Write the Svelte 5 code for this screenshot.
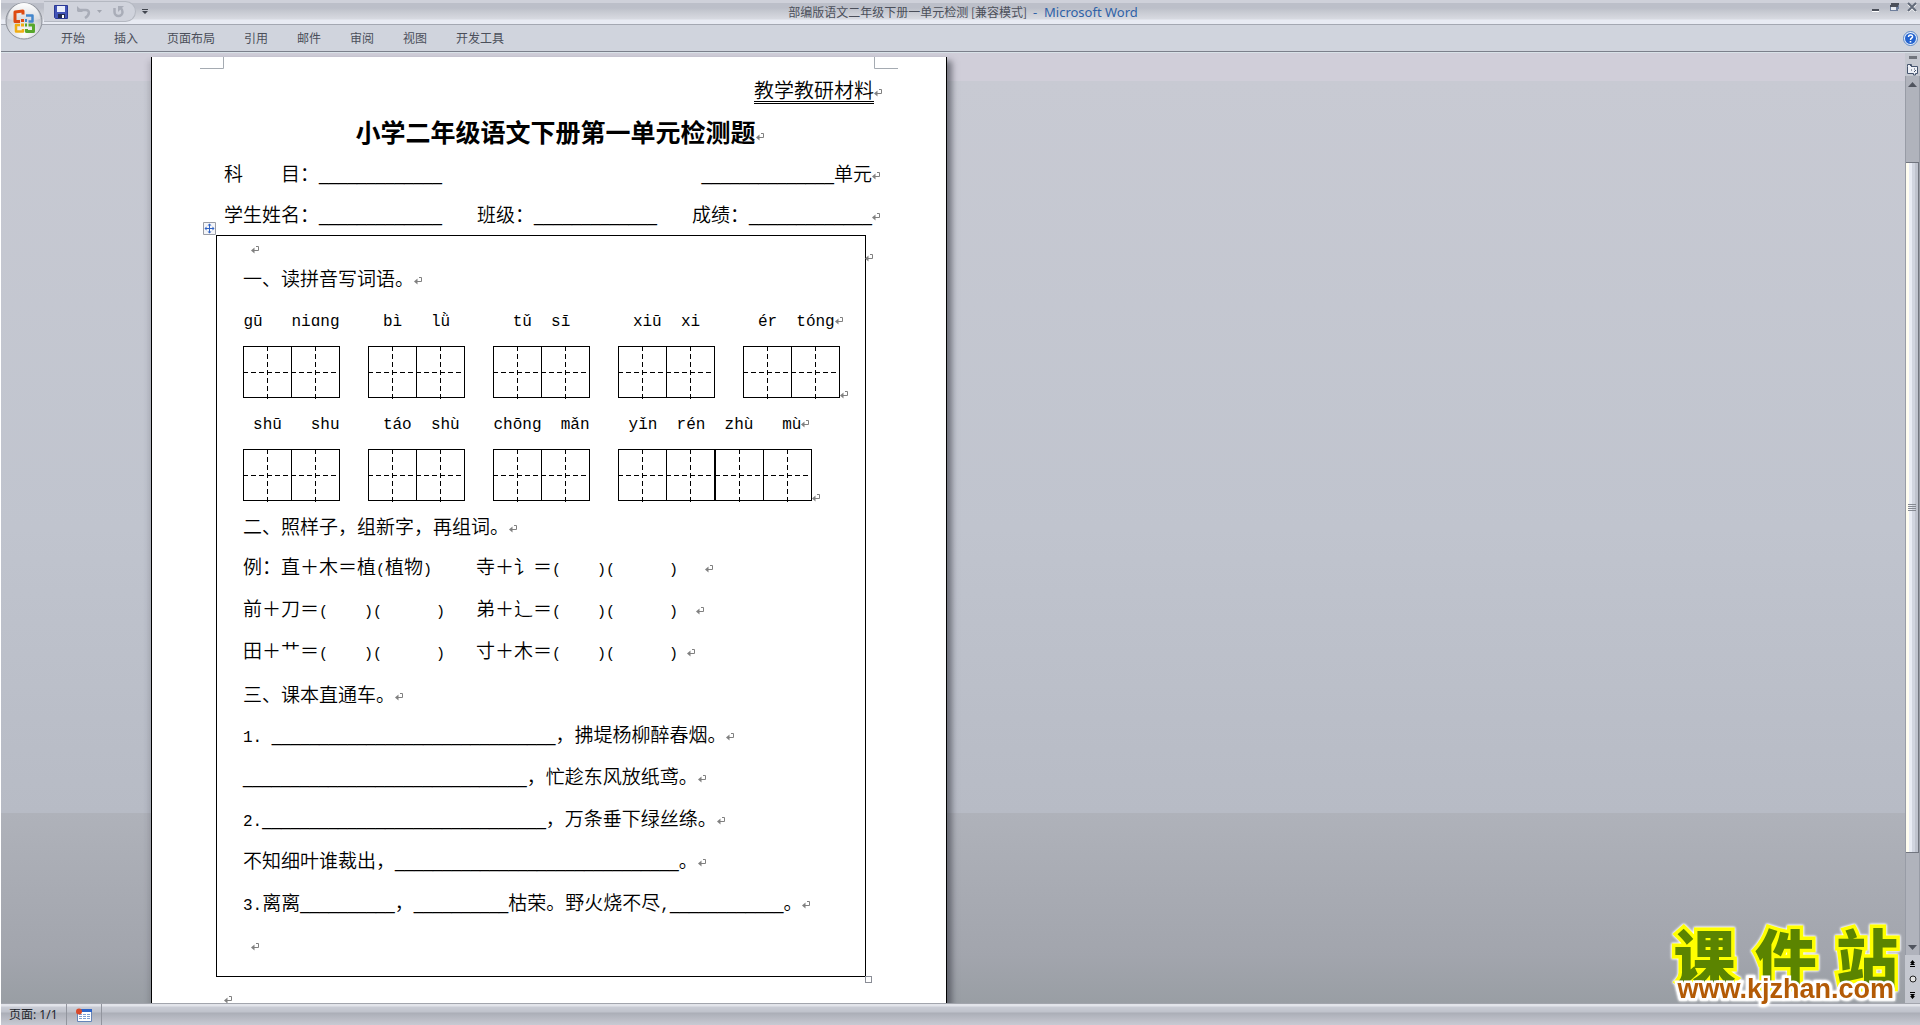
<script lang="ts">
	interface Run {
		kind: 'cjk' | 'latin' | 'blank';
		text: string;
	}

	const tabs = ['开始', '插入', '页面布局', '引用', '邮件', '审阅', '视图', '开发工具'];

	const pinyinRows = [
		[
			{ text: 'gū   niɑng', cells: 2 },
			{ text: 'bì   lǜ', cells: 2 },
			{ text: 'tǔ  sī', cells: 2 },
			{ text: 'xiū  xi', cells: 2 },
			{ text: ' ér  tóng', cells: 2 }
		],
		[
			{ text: ' shū   shu', cells: 2 },
			{ text: ' táo  shù', cells: 2 },
			{ text: 'chōng  mǎn', cells: 2 },
			{ text: 'yǐn  rén  zhù   mù', cells: 4 }
		]
	];

	const equations = [
		['例：直＋木＝植(植物)', '寺＋讠＝(    )(      )   '],
		['前＋刀＝(    )(      )', '弟＋辶＝(    )(      )  '],
		['田＋艹＝(    )(      )', '寸＋木＝(    )(      ) ']
	];

	const line = (n: number) => '_'.repeat(n);

	const verses = [
		`1. ${line(30)}，拂堤杨柳醉春烟。`,
		`${line(30)}，忙趁东风放纸鸢。`,
		`2.${line(30)}，万条垂下绿丝绦。`,
		`不知细叶谁裁出，${line(30)}。`,
		`3.离离${line(10)}，${line(10)}枯荣。野火烧不尽,${line(12)}。`
	];

	// half-width text and answer blanks use their own faces
	function runs(text: string): Run[] {
		const parts = text.match(/_+|[ -^`-~]+|[^ -~]+/g) ?? [];
		return parts.map((part) => {
			if (part[0] === '_') return { kind: 'blank', text: part };
			return { kind: part.charCodeAt(0) < 128 ? 'latin' : 'cjk', text: part };
		});
	}
</script>

{#snippet typeset(text: string)}{#each runs(text) as run}<span class={run.kind}>{run.text}</span>{/each}{/snippet}

{#snippet mark()}<svg class="mark" width="8" height="8" viewBox="0 0 8 8" aria-hidden="true"><path d="M5 .5h2.500v4H2" fill="none" stroke="#808080" /><path d="M0 4.500 3.500 1.500v6z" fill="#808080" /></svg>{/snippet}

{#snippet writingBox(cells: number)}
	<svg class="box" width={cells * 48 + cells / 2} height="54" shape-rendering="crispEdges" aria-hidden="true">
		{#each Array(cells / 2) as _, i}
			<g transform="translate({i * 97} 0)" fill="none" stroke="#000">
				<rect x=".5" y=".5" width="96" height="51" />
				<path d="M48.500 0v52" />
				<path d="M0 26.500h97M24.500 0v53M72.500 0v53" stroke-dasharray="5 3" />
			</g>
		{/each}
	</svg>
{/snippet}

<div class="window">
	<header class="titlebar">
		<div class="quick">
			<button aria-label="保存">
				<svg width="14" height="14" viewBox="0 0 14 14">
					<path d="M.5.5h13v13h-12l-1-1z" fill="#4254b8" stroke="#2a3894" />
					<path d="M3 1h8v6H3z" fill="#e9eefb" />
					<path d="M4 9h7v4H4z" fill="#222b52" />
					<path d="M8 10h2v3H8z" fill="#fff" />
				</svg>
			</button>
			<button class="undo" aria-label="撤消">
				<svg width="14" height="14" viewBox="0 0 14 14">
					<path d="M2 5h7c4 0 4 5-1 8" fill="none" stroke="#a9adb8" stroke-width="2.500" />
					<path d="M0 6V1l6 6H1z" fill="#a9adb8" />
				</svg>
				<svg width="5" height="4" viewBox="0 0 5 4"><path d="M0 0h5L2.500 3z" fill="#a2a6b0" /></svg>
			</button>
			<button aria-label="恢复">
				<svg width="14" height="14" viewBox="0 0 14 14">
					<path d="M3.500 3v4a4 4 0 0 0 8 0q0-2.500-2-4" fill="none" stroke="#a9adb8" stroke-width="2.500" />
					<path d="M7 1h6L7 7z" fill="#a9adb8" />
				</svg>
			</button>
		</div>
		<button class="more" aria-label="自定义快速访问工具栏">
			<svg width="6" height="6" viewBox="0 0 6 6"><path d="M0 0h6v1H0zM0 2h6L3 5z" fill="#42464f" /></svg>
		</button>
		<div class="caption">部编版语文二年级下册一单元检测 [兼容模式] <span class="app">&nbsp;-&nbsp; Microsoft Word</span></div>
		<div class="controls">
			<button aria-label="最小化">
				<svg width="10" height="12" viewBox="0 0 10 12"><path d="M1 9h7v2H1z" fill="#4c505a" /><path d="M1 11h7v1H1z" fill="#fff" /></svg>
			</button>
			<button aria-label="还原">
				<svg width="10" height="12" viewBox="0 0 10 12"><path d="M2 3h8v6H8V6H2z" fill="#6f7f9c" /><path d="M1 5h8v6H1z" fill="#6f7f9c" /><path d="M2 3h8v2H2zM1 5h8v2H1z" fill="#4c505a" /><path d="M2 7h5v3H2z" fill="#e8ebf2" /></svg>
			</button>
			<button aria-label="关闭">
				<svg width="10" height="12" viewBox="0 0 10 12"><path d="m1 4 8 8M9 4l-8 8" stroke="#fff" stroke-width="2" /><path d="m1 3 8 8M9 3l-8 8" stroke="#626a7a" stroke-width="2" /></svg>
			</button>
		</div>
	</header>

	<button class="office" aria-label="Office 按钮">
		<svg width="38" height="38" viewBox="0 0 38 38">
			<defs>
				<radialGradient id="orb" cx="50%" cy="85%" r="80%">
					<stop offset="0" stop-color="#fff" />
					<stop offset=".5" stop-color="#d9dbe0" />
					<stop offset="1" stop-color="#aeb2ba" />
				</radialGradient>
				<linearGradient id="shine" x2="0" y2="1">
					<stop offset="0" stop-color="#fff" />
					<stop offset="1" stop-color="#d5d7dc" />
				</linearGradient>
			</defs>
			<circle cx="19" cy="19" r="18" fill="url(#orb)" stroke="#8c9099" />
			<path d="M3 17a16 16 0 0 1 32 0q-16 5-32 0" fill="url(#shine)" />
			<g fill="none" stroke-width="3" stroke-linejoin="round">
				<path d="M18 12.500V9l-8 1v9.500h5" stroke="#dd4a12" />
				<path d="M21 13.500h6.500v6h-4" stroke="#4386cc" stroke-width="2.500" />
				<path d="M15 23h-4v6.500h7V27" stroke="#efad13" stroke-width="2.500" />
				<path d="M23.500 23h5v6.500h-7V27" stroke="#57a72c" />
			</g>
			<path d="M16 17h3v3h-3z" fill="#dd4a12" /><path d="M20 17h2v3h-2z" fill="#4386cc" />
			<path d="M16 21.500h3v3h-3z" fill="#efad13" /><path d="M20 21.500h2v3h-2z" fill="#57a72c" />
		</svg>
	</button>

	<nav class="ribbon">
		{#each tabs as tab}
			<button>{tab}</button>
		{/each}
		<button class="help" aria-label="帮助">
			<svg width="15" height="15" viewBox="0 0 15 15">
				<circle cx="7.500" cy="7.500" r="7" fill="#e9f1fc" stroke="#5b86c4" />
				<circle cx="7.500" cy="7.500" r="5.500" fill="#2463cf" />
				<path d="M5.500 6c0-3 4.500-2.500 4 0C9.200 7.300 7.500 7 7.500 9" fill="none" stroke="#fff" stroke-width="1.500" />
				<path d="M6.700 10h1.600v1.500H6.700z" fill="#fff" />
			</svg>
		</button>
	</nav>

	<div class="workspace">
		<main class="canvas">
			<article class="page">
				<svg class="corner left" width="24" height="12"><path d="M0 11.500h23.500V0" /></svg>
				<svg class="corner right" width="24" height="12"><path d="M24 11.500H.5V0" /></svg>

				<p class="source"><span>教学教研材料</span>{@render mark()}</p>
				<h1>小学二年级语文下册第一单元检测题{@render mark()}</h1>
				<p class="fields">
					<span>{@render typeset('科　　目：' + line(13))}</span>
					<span class="end">{@render typeset(line(14) + '单元')}{@render mark()}</span>
				</p>
				<p class="fields">
					<span>{@render typeset('学生姓名：' + line(13))}</span>
					<span>{@render typeset('班级：' + line(13))}</span>
					<span class="end">{@render typeset('成绩：' + line(13))}{@render mark()}</span>
				</p>

				<section class="sheet">
					<svg class="handle" width="13" height="13" viewBox="0 0 13 13" aria-hidden="true">
						<path d="M.5.5h12v12H.5z" fill="#f4f5f8" stroke="#9a9da6" />
						<path d="M6.500 3v7M3 6.500h7" stroke="#2f62c4" />
						<path d="m6.500 1.500 2 2h-4zM6.500 11.500l2-2h-4zM1.500 6.500l2-2v4zM11.500 6.500l-2-2v4z" fill="#2f62c4" />
					</svg>
					<span class="row-end">{@render mark()}</span>
					<span class="resize"></span>

					<p class="empty">{@render mark()}</p>
					<h2>一、读拼音写词语。{@render mark()}</h2>
					{#each pinyinRows as row}
						<div class="pinyin">
							{#each row as word, i}
								<span class="latin" class:wide={word.cells > 2}>{word.text}{#if i === row.length - 1}<i class="after">{@render mark()}</i>{/if}</span>
							{/each}
						</div>
						<div class="boxes">
							{#each row as word}
								{@render writingBox(word.cells)}
							{/each}
							{@render mark()}
						</div>
					{/each}

					<h2>二、照样子，组新字，再组词。{@render mark()}</h2>
					{#each equations as [first, second]}
						<p class="equation">
							<span>{@render typeset(first)}</span>
							<span>{@render typeset(second)}{@render mark()}</span>
						</p>
					{/each}

					<h2>三、课本直通车。{@render mark()}</h2>
					{#each verses as verse}
						<p>{@render typeset(verse)}{@render mark()}</p>
					{/each}
					<p class="empty tall">{@render mark()}</p>
				</section>
				<p class="tail">{@render mark()}</p>
			</article>
		</main>

		<aside class="scroll">
			<div class="split"></div>
			<button class="ruler" aria-label="标尺">
				<svg width="13" height="14" viewBox="0 0 13 14"><path d="M1.500 4.500V2.500h4v2h6v7h-2v1.500h-2v-1.500h-6z" fill="#eef0f6" stroke="#46546e" /><path d="m3 2 3 3M5 8h1M8 7h1M8 10l2-2" stroke="#46546e" /></svg>
			</button>
			<div class="track">
				<button aria-label="向上滚动"><svg width="9" height="5" viewBox="0 0 9 5"><path d="m4.500 0 4.500 5H0z" fill="#50545e" /></svg></button>
				<div class="thumb"><i></i><i></i><i></i><i></i></div>
				<button class="down" aria-label="向下滚动"><svg width="9" height="5" viewBox="0 0 9 5"><path d="M4.500 5 0 0h9z" fill="#50545e" /></svg></button>
			</div>
			<div class="browse">
				<button aria-label="前一页"><svg width="7" height="7" viewBox="0 0 7 7"><path d="m3.500 0 2.500 3H1zM3.500 2 6 5H1zM1 6h5v1H1z" /></svg></button>
				<button aria-label="选择浏览对象"><svg width="8" height="8" viewBox="0 0 8 8"><circle cx="4" cy="4" r="3" fill="#e4e4e4" stroke="#222" /></svg></button>
				<button aria-label="下一页"><svg width="7" height="7" viewBox="0 0 7 7"><path d="M1 0h5v1H1zM3.500 5 1 2h5zM3.500 7 1 4h5z" /></svg></button>
			</div>
		</aside>

		<div class="watermark">
			<div class="site"><span>课</span><span>件</span><span>站</span></div>
			<div class="url">www.kjzhan.com</div>
		</div>
	</div>

	<footer class="status">
		<button>页面: 1/1</button>
		<button aria-label="录制宏">
			<svg width="16" height="14" viewBox="0 0 16 14">
				<path d="M1.500 1.500h14v12h-14z" fill="#fff" stroke="#6684b8" />
				<path d="M2 1h14v3H2z" fill="#2c63c8" />
				<path d="M3 6.500h11M3 8.500h11M3 10.500h11" stroke="#7fa0d4" stroke-dasharray="3 1" />
				<circle cx="3" cy="3.500" r="3" fill="#d9492a" />
			</svg>
		</button>
	</footer>
</div>

<style>
	:global(body) {
		background: #fff;
	}

	.window {
		position: relative;
		display: flex;
		flex-direction: column;
		box-sizing: border-box;
		height: 100vh;
		border-left: 1px solid #fff;
		overflow: hidden;
		font: 12px/16px 'Noto Sans', 'Noto Sans CJK SC', sans-serif;
		color: #4b4f5a;
	}

	p,
	h1,
	h2 {
		margin: 0;
	}

	button {
		display: flex;
		align-items: center;
		padding: 0;
		border: 0;
		background: none;
		font: inherit;
		color: inherit;
	}

	.titlebar {
		display: grid;
		grid-template-columns: auto 1fr auto 1fr;
		flex: none;
		height: 24px;
		border-bottom: 1px solid #a4a8b2;
		background: linear-gradient(#cfd1da 0 3px, #bcbfc9 3px 8px, #c5c8d0 11px, #d8dae1 19px, #e8ebf3 20px);
	}

	.quick {
		display: flex;
		align-items: center;
		gap: 9px;
		box-sizing: border-box;
		width: 92px;
		height: 21px;
		margin: 1px 0 0 43px;
		padding-left: 10px;
		border: 1px solid #b4b8c1;
		border-left: 0;
		border-radius: 0 11px 11px 0;
		background: #d0d3dc;
	}

	.undo {
		gap: 6px;
	}

	.more {
		width: 6px;
		margin-left: 6px;
	}

	.caption {
		margin-right: 130px;
		line-height: 24px;
		white-space: nowrap;
		font-family: 'Noto Sans CJK SC', sans-serif;
	}

	.app {
		font: 13px/24px 'Noto Sans', sans-serif;
		color: #2f62a8;
	}

	.controls {
		display: flex;
		align-items: start;
		justify-content: end;
		gap: 8px;
		padding-right: 3px;
	}

	.office {
		position: absolute;
		top: 2px;
		left: 4px;
	}

	.ribbon {
		display: flex;
		flex: none;
		height: 26px;
		padding-left: 46px;
		border-bottom: 1px solid #7b808b;
		background: #d0d4dd;
		font-family: 'Noto Sans CJK SC', sans-serif;
	}

	.ribbon button {
		margin-right: 1px;
		padding: 0 14px;
	}

	.ribbon .help {
		margin: 0 2px 0 auto;
		padding: 0;
	}

	.workspace {
		position: relative;
		display: flex;
		flex: 1;
		min-height: 0;
		border-top: 1px solid #d9e2e8;
		background: linear-gradient(
			#d0ced9 0 28px,
			#c8cad3 28px,
			#c0c4ce 50%,
			#b7bbc5 80%,
			#afb2ba 80%,
			#a2a5ad 95%,
			#999ea4
		);
	}

	.canvas {
		flex: 1;
		min-width: 0;
		padding-top: 4px;
		overflow: hidden;
	}

	.page {
		position: relative;
		box-sizing: border-box;
		max-width: 796px;
		height: 100%;
		margin-left: 150px;
		padding: 10px 73px 0 72px;
		border: solid #000;
		border-width: 0 1px;
		background: #fff;
		box-shadow: 5px 4px 6px rgb(60 62 72 / 0.6), -2px 4px 6px rgb(60 62 72 / 0.2);
		font: 350 19px/42px 'Noto Sans CJK SC', sans-serif;
		color: #000;
		white-space: nowrap;
	}

	.corner {
		position: absolute;
		top: 0;
		fill: none;
		stroke: #a5abb2;
	}

	.corner.left {
		left: 48px;
	}

	.corner.right {
		right: 48px;
	}

	.mark {
		vertical-align: 1px;
	}

	.latin {
		font: 16px 'Liberation Mono', monospace;
		white-space: pre;
	}

	.blank {
		font: 17px 'Liberation Sans', sans-serif;
	}

	.source {
		height: 46px;
		margin-right: -9px;
		font-size: 20px;
		line-height: 46px;
		text-align: right;
	}

	.source span {
		display: inline-block;
		border-bottom: 3px double #000;
		line-height: 22px;
	}

	h1 {
		height: 40px;
		padding-left: 22px;
		font-size: 25px;
		font-weight: 700;
		line-height: 36px;
		text-align: center;
	}

	h2 {
		height: 42px;
		font-size: 19px;
		font-weight: inherit;
	}

	.fields {
		display: flex;
		justify-content: space-between;
		height: 41px;
		line-height: 40px;
	}

	.end {
		margin-right: -7px;
	}

	.sheet {
		position: relative;
		margin: 0 7px 0 -8px;
		padding: 0 0 9px 26px;
		border: 1px solid #000;
	}

	.sheet p {
		height: 42px;
		line-height: 38px;
	}

	.handle {
		position: absolute;
		top: -14px;
		left: -14px;
	}

	.row-end {
		position: absolute;
		top: 0;
		left: 100%;
		line-height: 38px;
	}

	.resize {
		position: absolute;
		top: 100%;
		left: 100%;
		width: 5px;
		height: 5px;
		border: 1px solid #8a8d96;
	}

	.sheet .empty {
		height: 21px;
		padding-left: 8px;
		line-height: 21px;
	}

	.sheet .tall {
		height: 42px;
		line-height: 38px;
	}

	.pinyin {
		display: flex;
		gap: 28px;
		height: 42px;
	}

	.pinyin .latin {
		width: 97px;
		line-height: 46px;
		text-align: center;
	}

	.pinyin .wide {
		width: 194px;
	}

	.after {
		display: inline-block;
		width: 0;
	}

	.boxes {
		display: flex;
		align-items: end;
		height: 53px;
		padding: 5px 0 3px;
	}

	.box {
		display: block;
		align-self: start;
		flex: none;
	}

	.box + .box {
		margin-left: 28px;
	}

	.equation {
		display: grid;
		grid-template-columns: 233px auto;
	}

	.equation .latin {
		font-size: 15px;
	}

	.tail {
		height: 42px;
		line-height: 40px;
	}

	.scroll {
		display: flex;
		flex-direction: column;
		flex: none;
		width: 15px;
		background: #c5c8d0;
	}

	.scroll button {
		justify-content: center;
		width: 100%;
	}

	.split {
		width: 8px;
		height: 3px;
		margin: 3px 4px;
		background: #70747c;
	}

	.ruler {
		height: 14px;
	}

	.track {
		display: flex;
		flex: 1;
		flex-direction: column;
		box-sizing: border-box;
		border: 1px solid #989ca6;
		border-width: 0 1px;
		background: #b0b3bc;
	}

	.track button {
		flex: none;
		height: 16px;
	}

	.thumb {
		display: flex;
		flex: 690 0 0;
		flex-direction: column;
		align-items: center;
		justify-content: center;
		gap: 1px;
		margin-top: 70px;
		border: 1px solid #71757f;
		border-left: 0;
		background: linear-gradient(90deg, #fffdf0 0 3px, #e9ecf5 3px 6px, #d1d5e0 6px 9px, #bfc3ce 9px);
	}

	.thumb i {
		width: 8px;
		height: 1px;
		background: #858992;
	}

	.down {
		margin-top: 86px;
	}

	.browse {
		display: flex;
		flex-direction: column;
		height: 48px;
	}

	.browse button {
		flex: 1;
	}

	.watermark {
		position: absolute;
		right: 26px;
		bottom: 1px;
		filter: drop-shadow(0 0 1px #fff) drop-shadow(0 0 1px #fff);
	}

	.site {
		display: flex;
		justify-content: space-between;
		margin: 0 -4px;
		font: 900 62px/42px 'Noto Sans CJK SC', sans-serif;
		color: #5b8400;
		-webkit-text-stroke: 7px #ff0;
		paint-order: stroke fill;
	}

	.url {
		font: 700 27px/26px 'Liberation Sans', sans-serif;
		color: #b35a05;
		-webkit-text-stroke: 5px #fff;
		paint-order: stroke fill;
	}

	.status {
		display: flex;
		flex: none;
		height: 21px;
		border-top: 1px solid #a2a5ad;
		background: linear-gradient(#e2e4ea 0 2px, #c9ccd5 3px, #bfc2cb 8px, #abaeb7 9px, #c8cad3);
		color: #22252c;
	}

	.status button {
		padding: 0 8px;
		border-right: 1px solid #92959e;
	}

	.status button + button {
		padding: 0 9px;
	}
</style>
